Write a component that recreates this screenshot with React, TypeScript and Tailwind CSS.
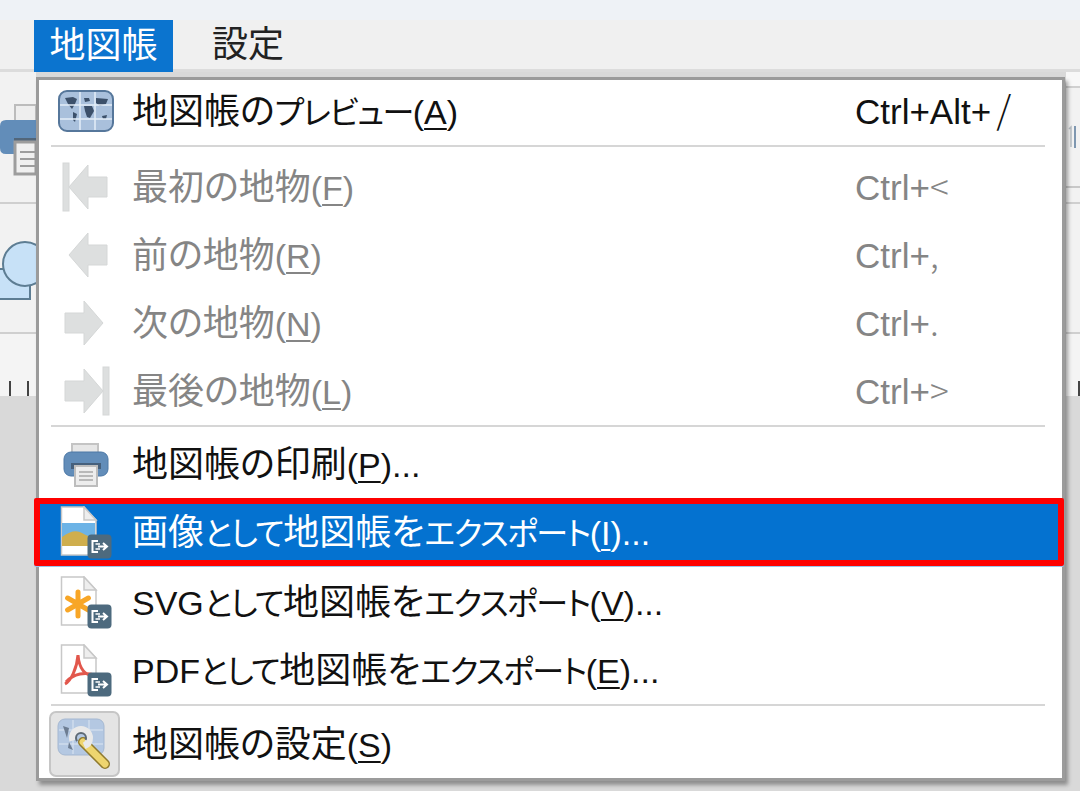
import type { ReactNode } from 'react';

const font = "font-['Liberation_Sans','Noto_Sans_CJK_JP',sans-serif]";

function Arrow({ dir, bar }: { dir: 'l' | 'r'; bar?: boolean }) {
  return (
    <svg width="48" height="50" viewBox="0 0 48 50" fill="#dddfdf" stroke="#d5d7d7">
      {dir === 'l' ? (
        <path d="M26 3 L7 25 L26 47 V35 H45 V15 H26 Z" />
      ) : (
        <path d="M22 3 L41 25 L22 47 V35 H3 V15 H22 Z" />
      )}
      {bar && dir === 'l' && <rect x="1" y="1" width="6" height="48" />}
      {bar && dir === 'r' && <rect x="41" y="1" width="6" height="48" />}
    </svg>
  );
}

function Badge() {
  return (
    <svg className="absolute right-0 bottom-0" width="25" height="25" viewBox="0 0 25 25">
      <rect x="0.5" y="0.5" width="24" height="24" rx="4" fill="#4d6a7e" />
      <path d="M11 7 H5.5 V18 H11" fill="none" stroke="#fff" strokeWidth="2" />
      <path d="M8.5 10 H13 M8.5 15 H13" fill="none" stroke="#fff" strokeWidth="1.6" />
      <path d="M11 12.5 H19 M16 9 L20 12.5 L16 16" fill="none" stroke="#fff" strokeWidth="2" />
    </svg>
  );
}

function Doc({ children }: { children?: ReactNode }) {
  return (
    <div className="relative w-[52px] h-[53px]">
      <svg width="52" height="53" viewBox="0 0 52 53">
        <path d="M1.5 1 H24 L36 14 V49 H1.5 Z" fill="#fff" stroke="#c8c8c8" strokeWidth="1.5" />
        <path d="M24 1 V14 H36 Z" fill="#eeeeee" stroke="#c8c8c8" strokeWidth="1.5" />
        {children}
      </svg>
      <Badge />
    </div>
  );
}

function MapIcon() {
  return (
    <svg className="-mt-[3px]" width="56" height="42" viewBox="0 0 56 42">
      <rect x="1" y="1" width="54" height="40" rx="8" fill="#a9c0dc" stroke="#56779b" strokeWidth="2" />
      <g fill="#3c506a">
        <path d="M7 8 L15 7 L19 9 L17 14 L14 19 L10 14 Z" />
        <path d="M15 22 L19 24 L17 32 L15 30 Z" />
        <path d="M26 8 L31 8 L32 11 L27 12 Z" />
        <path d="M26 16 L34 16 L36 21 L32 28 L29 27 L27 21 Z" />
        <path d="M38 8 L50 9 L48 14 L42 16 L38 13 Z" />
        <path d="M44 26 L49 25 L48 29 L45 29 Z" />
      </g>
      <path d="M22 2 V40 M37 2 V40 M2 15 H54 M2 29 H54" stroke="#e3edf7" strokeWidth="1.5" />
    </svg>
  );
}

function Printer() {
  return (
    <svg className="mt-[4px]" width="46" height="44" viewBox="0 0 46 44">
      <rect x="9" y="1" width="26" height="14" fill="#e7e7e7" stroke="#c4c4c4" strokeWidth="2" />
      <rect x="1" y="9" width="44" height="24" rx="7" fill="#628db9" stroke="#4c78a6" />
      <rect x="8" y="20" width="30" height="6" fill="#46607c" />
      <rect x="12" y="23" width="22" height="20" fill="#ededed" stroke="#bdbdbd" strokeWidth="2" />
      <path d="M16 29 H30 M16 33 H30 M16 37 H30" stroke="#a8a8a8" strokeWidth="1.5" />
    </svg>
  );
}

function ImgDoc() {
  return (
    <Doc>
      <rect x="2" y="17" width="33" height="23" fill="#6cb3e6" />
      <path d="M2 40 V31 Q14 22 22 27 T35 31 V40 Z" fill="#cfae4d" />
    </Doc>
  );
}

function SvgDoc() {
  return (
    <Doc>
      <g stroke="#f8a626" strokeWidth="5" strokeLinecap="round">
        <path d="M18 16 V40 M7.6 22 L28.4 34 M28.4 22 L7.6 34" />
      </g>
    </Doc>
  );
}

function PdfDoc() {
  return (
    <Doc>
      <path d="M18 11 C19 24 25 33 35 31 M18 11 C17 24 11 37 5 40 M6 38 C14 29 26 28 34 31" fill="none" stroke="#e2574c" strokeWidth="3" />
    </Doc>
  );
}

function SettingsIcon() {
  return (
    <div className="flex items-center justify-center w-[71px] h-[66px] mt-[5px] -ml-[4px] bg-[#e4e4e4] border-[2px] border-[#c6c6c6] rounded-[7px]">
      <svg width="58" height="52" viewBox="0 0 58 52">
        <rect x="3" y="1" width="46" height="36" rx="7" fill="#b4c8e2" stroke="#a5b8d2" />
        <path d="M18 2 V36 M34 2 V36 M4 12 H48 M4 26 H48" stroke="#dce6f2" />
        <path d="M8 8 L14 10 L12 20 Z M14 24 L18 32 L13 30 Z" fill="#6d7d92" />
        <path d="M28 24 L50 46" stroke="#8f7a2e" strokeWidth="10" strokeLinecap="round" />
        <path d="M28 24 L50 46" stroke="#eed56f" strokeWidth="7" strokeLinecap="round" />
        <circle cx="26" cy="20" r="8.5" fill="none" stroke="#e9e9e9" strokeWidth="7" strokeDasharray="40 14" strokeDashoffset="-24" />
        <circle cx="26" cy="20" r="5" fill="none" stroke="#5e6a75" strokeWidth="2" strokeDasharray="22 10" strokeDashoffset="-12" />
      </svg>
    </div>
  );
}

function Label({ prefix, text, u, tail, className }: { prefix?: string; text: string; u: string; tail?: string; className?: string }) {
  const parts = text.split(/([ァ-ヶーとして]+)/).filter(Boolean);
  return (
    <span className={`text-[34px] leading-none whitespace-nowrap ${className ?? ''}`}>
      {prefix}
      <span className="text-[36px] [font-feature-settings:'palt']">
        {parts.map((p, i) =>
          /[ァ-ヶーとして]/.test(p) ? (
            <span key={i} className="text-[32px] tracking-[-1.5px]">{p}</span>
          ) : (
            <span key={i}>{p}</span>
          ),
        )}
      </span>
      (<span className="underline decoration-[2px] underline-offset-[4px]">{u}</span>){tail}
    </span>
  );
}

function Shortcut({ base, sym, symClass, className }: { base: string; sym: string; symClass?: string; className: string }) {
  return (
    <span className={`w-[207px] shrink-0 text-[35px] leading-none whitespace-nowrap ${className}`}>
      {base}
      <span className={`font-['Noto_Sans_CJK_JP',sans-serif] font-light ${symClass ?? ''}`}>{sym}</span>
    </span>
  );
}

type RowP = { icon: ReactNode; prefix?: string; text: string; u: string; tail?: string; keyBase?: string; keySym?: string; symClass?: string; off?: boolean; h: string; textPad?: string };

function Row({ icon, prefix, text, u, tail, keyBase, keySym, symClass, off, h, textPad = 'pt-[3px]' }: RowP) {
  const c = off ? 'text-[#858585] pb-[2px]' : 'text-[#111] pb-[8px]';
  return (
    <div className={`flex items-center ${h}`}>
      <div className="w-[93px] pl-[1px] shrink-0 flex items-center justify-center">{icon}</div>
      <div className={`flex-1 min-w-0 ${textPad}`}>
        <Label prefix={prefix} text={text} u={u} tail={tail} className={off ? 'text-[#858585]' : 'text-[#111]'} />
      </div>
      {keyBase && <Shortcut base={keyBase} sym={keySym ?? ''} symClass={symClass} className={c} />}
    </div>
  );
}

const Sep = () => <div className="h-[2px] bg-[#d6d6d6] ml-[12px] mr-[17px]" />;

function LeftStrip() {
  return (
    <div className="w-[36px] flex flex-col">
      <div className="h-[132px] flex flex-col justify-end bg-[#f2f2f2] border-b-[2px] border-[#cfcfcf] pb-[26px]">
        <svg width="36" height="72" viewBox="0 0 36 72">
          <rect x="15" y="1" width="21" height="20" fill="#eeeeee" stroke="#bcbcbc" strokeWidth="2" />
          <path d="M36 16 H6 Q0 16 0 22 V44 Q0 50 6 50 H14 V36 H36 Z" fill="#628db9" />
          <rect x="14" y="34" width="22" height="6" fill="#52667a" />
          <rect x="15" y="38" width="21" height="32" fill="#f0f0f0" stroke="#9d9d9d" strokeWidth="3" />
          <path d="M20 48 H36 M20 55 H36 M20 62 H36" stroke="#9d9d9d" strokeWidth="2" />
        </svg>
      </div>
      <div className="h-[130px] bg-[#f2f2f2] border-b-[2px] border-[#cfcfcf] pt-[35px]">
        <svg width="36" height="62" viewBox="0 0 36 62">
          <path d="M-2 30 V60 H30 V30 Z" fill="#c7e1f7" stroke="#5d7d93" strokeWidth="2" />
          <circle cx="25" cy="25" r="22" fill="#c7e1f7" stroke="#5d7d93" strokeWidth="2" />
        </svg>
      </div>
      <div className="h-[62px] flex items-end gap-[16px] pl-[9px] bg-[#f4f4f4]">
        <div className="w-[2px] h-[15px] bg-[#444]" />
        <div className="w-[2px] h-[15px] bg-[#444]" />
      </div>
      <div className="flex-1 bg-[#d9d9d9]" />
    </div>
  );
}

function RightStrip() {
  return (
    <div className="w-[14px] flex flex-col">
      <div className="h-[16px] bg-[#f8f8f8] border-b-[2px] border-[#d0d0d0]" />
      <div className="h-[100px] flex items-center bg-[#f2f2f2] border-b-[2px] border-[#c8c8c8] pl-[2px]">
        <svg width="10" height="24" viewBox="0 0 10 24">
          <path d="M1 4 L3 2 V22" fill="none" stroke="#b8bec4" strokeWidth="1.5" />
          <path d="M7 1 V23" stroke="#7e97b0" strokeWidth="2" />
        </svg>
      </div>
      <div className="h-[16px] bg-[#f2f2f2] border-b-[2px] border-[#cfcfcf]" />
      <div className="h-[130px] bg-[#f2f2f2] border-b-[2px] border-[#cfcfcf]" />
      <div className="h-[62px] flex items-end justify-end bg-[#f4f4f4]">
        <div className="w-[2px] h-[15px] bg-[#444]" />
      </div>
      <div className="flex-1 bg-[#d9d9d9]" />
    </div>
  );
}

export default function App() {
  return (
    <div className={`relative flex flex-col w-[1080px] h-[791px] overflow-hidden bg-[#d9d9d9] ${font}`}>
      <div className="h-[20px] bg-[#eef2f6]" />
      <div className="flex h-[52px] bg-[#f0f0f0] pl-[34px] border-b-[3px] border-[#dcdcdc]">
        <div className="w-[139px] h-[52px] bg-[#0b74cf] text-white text-[36px] flex items-center justify-center">地図帳</div>
        <div className="ml-[39px] text-[#222] text-[36px] flex items-center">設定</div>
      </div>
      <div className="flex-1 flex justify-between">
        <LeftStrip />
        <RightStrip />
      </div>

      <div className="absolute left-[36px] top-[77px] w-[1029px] h-[704px] bg-white border-[3px] border-[#9b9b9b] shadow-[3px_4px_4px_rgba(0,0,0,0.35)]">
        <Row h="h-[65px]" textPad="pt-0" icon={<MapIcon />} text="地図帳のプレビュー" u="A" keyBase="Ctrl+Alt+" keySym="/" symClass="ml-[5px] text-[38px]" />
        <Sep />
        <div className="pt-[6px]">
          <Row h="h-[68px]" off icon={<Arrow dir="l" bar />} text="最初の地物" u="F" keyBase="Ctrl+" keySym="<" />
          <Row h="h-[68px]" off icon={<Arrow dir="l" />} text="前の地物" u="R" keyBase="Ctrl+" keySym="," />
          <Row h="h-[68px]" off icon={<Arrow dir="r" />} text="次の地物" u="N" keyBase="Ctrl+" keySym="." />
          <Row h="h-[68px]" off icon={<Arrow dir="r" bar />} text="最後の地物" u="L" keyBase="Ctrl+" keySym=">" />
        </div>
        <Sep />
        <Row h="h-[71px]" textPad="pt-[5px]" icon={<Printer />} text="地図帳の印刷" u="P" tail="..." />
        <div className="-ml-[5px] -mr-[2px] h-[68px] flex items-center bg-[#0472d0] border-[6px] border-[#fe0000] rounded-[2px] text-white shadow-[0_1px_0_#9cc4ec]">
          <div className="w-[92px] shrink-0 flex items-center justify-center"><ImgDoc /></div>
          <div className="pt-[3px]"><Label text="画像として地図帳をエクスポート" u="I" tail="..." /></div>
        </div>
        <div className="pt-[2px]">
          <Row h="h-[68px]" icon={<SvgDoc />} prefix="SVG" text="として地図帳をエクスポート" u="V" tail="..." />
          <Row h="h-[68px]" icon={<PdfDoc />} prefix="PDF" text="として地図帳をエクスポート" u="E" tail="..." />
        </div>
        <Sep />
        <Row h="h-[70px]" textPad="pt-[9px]" icon={<SettingsIcon />} text="地図帳の設定" u="S" />
      </div>
    </div>
  );
}
